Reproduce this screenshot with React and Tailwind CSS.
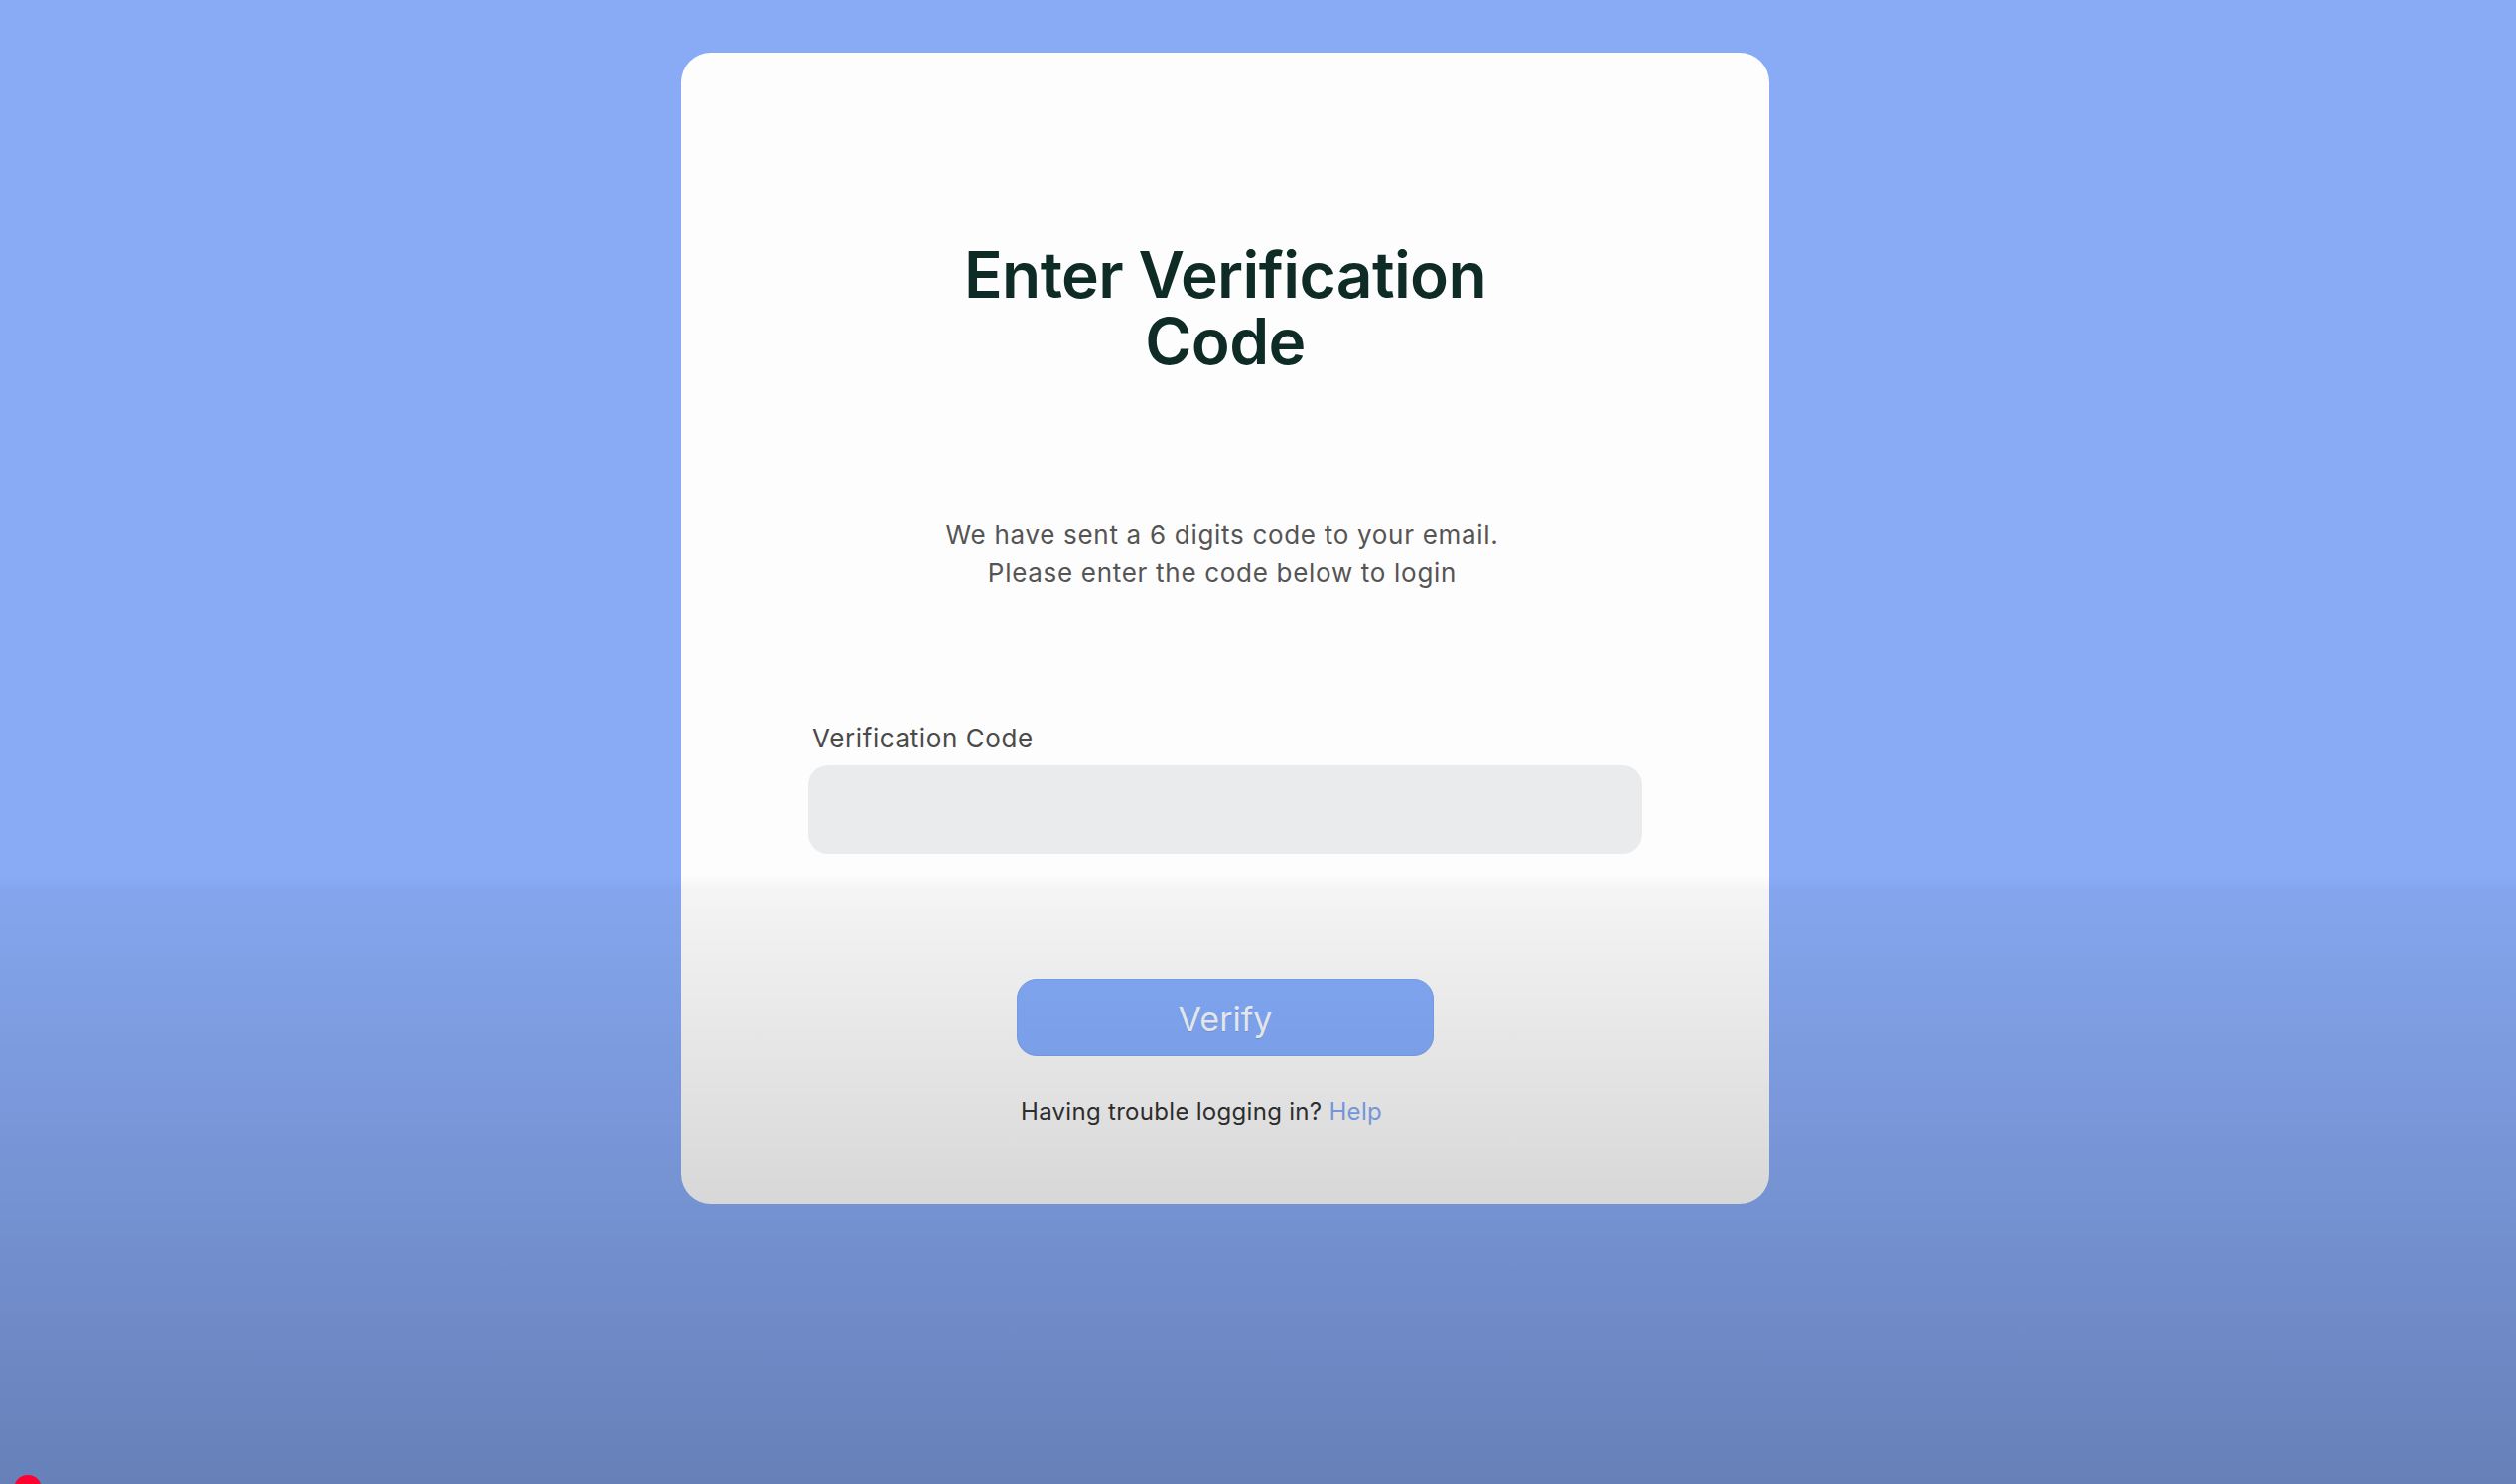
import React from "react";

export default function App() {
  return (
    <div className="relative min-h-screen h-[1495px] overflow-hidden bg-[#89abf6] font-['Inter','Noto_Sans',sans-serif]">
      <div className="flex justify-center pt-[53px] pr-[66px]">
        <div className="w-[1096px] h-[1160px] rounded-[30px] bg-[#fdfdfd] flex flex-col items-center pt-[190px] px-[128px] pb-[78px]">
          <h1 className="text-[64px] leading-[67px] font-semibold text-[#0e2b25] text-center tracking-[-0.6px]">
            Enter Verification
            <br />
            Code
          </h1>

          <p className="mt-[143px] mr-[6px] text-[26px] leading-[38px] tracking-[0.7px] text-[#555555] text-center">
            We have sent a 6 digits code to your email.
            <br />
            Please enter the code below to login
          </p>

          <div className="mt-[133px] w-full flex flex-col">
            <label className="pl-[4px] text-[26px] leading-[30px] tracking-[0.6px] text-[#4a4a4a]">
              Verification Code
            </label>
            <input
              type="text"
              className="mt-[12px] h-[89px] w-full rounded-[20px] bg-[#e9ebec] outline-none px-6 text-[28px]"
            />
          </div>

          <button className="mt-[126px] w-[420px] h-[84px] rounded-[20px] bg-[#87afff] border border-[#7fa5f2] text-[34px] text-[#f6faff] pt-[2px] [text-shadow:0_1px_1px_rgba(0,0,0,0.12)]">
            Verify
          </button>

          <p className="mt-[41px] mr-[48px] text-[24px] leading-[30px] tracking-[0.3px] text-[#333333]">
            Having trouble logging in? <span className="text-[#84aaf2]">Help</span>
          </p>
        </div>
      </div>

      {/* video shade along the bottom */}
      <div className="pointer-events-none absolute inset-0 bg-[linear-gradient(to_bottom,transparent_59%,rgba(0,0,0,0.035)_60%,rgba(0,0,0,0.25)_100%)]" />

      {/* progress dot */}
      <div className="absolute left-[14px] top-[1486px] w-[28px] h-[28px] rounded-full bg-[#ff0033]" />
    </div>
  );
}
